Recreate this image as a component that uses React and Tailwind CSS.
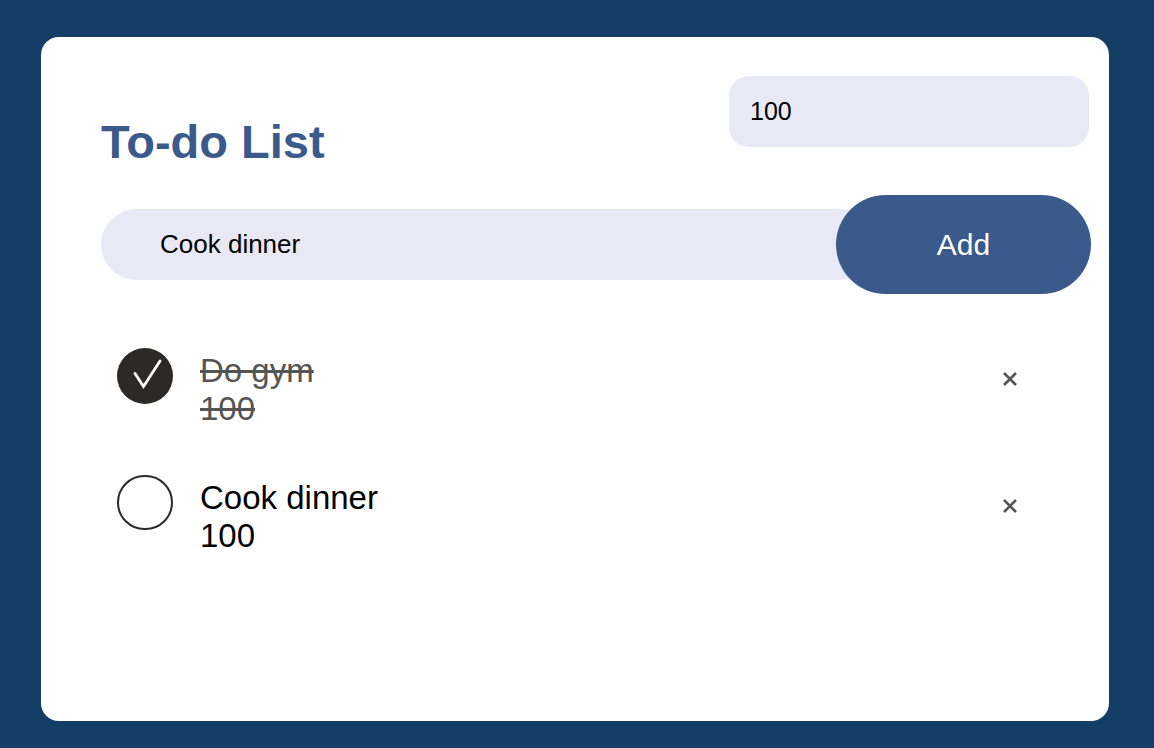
import React from "react";

function XIcon() {
  return (
    <svg width="16" height="16" viewBox="0 0 16 16" className="block">
      <path d="M2 2 L14 14 M14 2 L2 14" stroke="#555555" strokeWidth="2.6" strokeLinecap="butt" />
    </svg>
  );
}

function Item({ done, title, amount }) {
  return (
    <div className="flex items-start">
      {done ? (
        <div className="w-[56px] h-[56px] rounded-full bg-[#2b2a28] flex items-center justify-center shrink-0">
          <svg width="56" height="56" viewBox="0 0 56 56">
            <path d="M18 25.5 L26.5 38.5 L43 13" fill="none" stroke="#ffffff" strokeWidth="2.8" strokeLinecap="round" strokeLinejoin="miter" />
          </svg>
        </div>
      ) : (
        <div className="w-[56px] h-[55px] rounded-full border-2 border-[#2b2a28] bg-white shrink-0" />
      )}
      <div
        className={
          "ml-[27px] text-[33px] leading-[38px] " +
          (done ? "mt-[4px] text-[#555555] line-through" : "mt-[4px] text-black")
        }
      >
        <div>{title}</div>
        <div>{amount}</div>
      </div>
      <div className="ml-auto mr-[73px] mt-[23px]">
        <XIcon />
      </div>
    </div>
  );
}

export default function App() {
  return (
    <div
      className="w-[1154px] h-[748px] bg-[#143e66] pt-[37px] pl-[41px]"
      style={{ fontFamily: '"Liberation Sans", Arial, sans-serif' }}
    >
      <div className="w-[1068px] h-[684px] bg-white rounded-[18px] pl-[60px] pr-[18px] pt-[39px]">
        <div className="flex items-start justify-between">
          <h1 className="mt-[39px] text-[47px] leading-[53px] font-bold text-[#3a5a8c]">To-do List</h1>
          <div className="mr-[2px] w-[360px] h-[71px] rounded-[20px] bg-[#e8e9f5] flex items-center pl-[21px] text-[25px] text-black">
            100
          </div>
        </div>
        <div className="flex items-center mt-[27px]">
          <div className="h-[71px] flex-1 rounded-full bg-[#e8e9f5] flex items-center pl-[59px] text-[26px] text-black -mr-[40px]">
            Cook dinner
          </div>
          <div className="relative w-[255px] h-[99px] rounded-full bg-[#3a5a8c] text-white text-[30px] flex items-center justify-center">
            Add
          </div>
        </div>
        <div className="mt-[54px] pl-[16px] flex flex-col gap-[47px]">
          <Item done title="Do gym" amount="100" />
          <Item title="Cook dinner" amount="100" />
        </div>
      </div>
    </div>
  );
}
